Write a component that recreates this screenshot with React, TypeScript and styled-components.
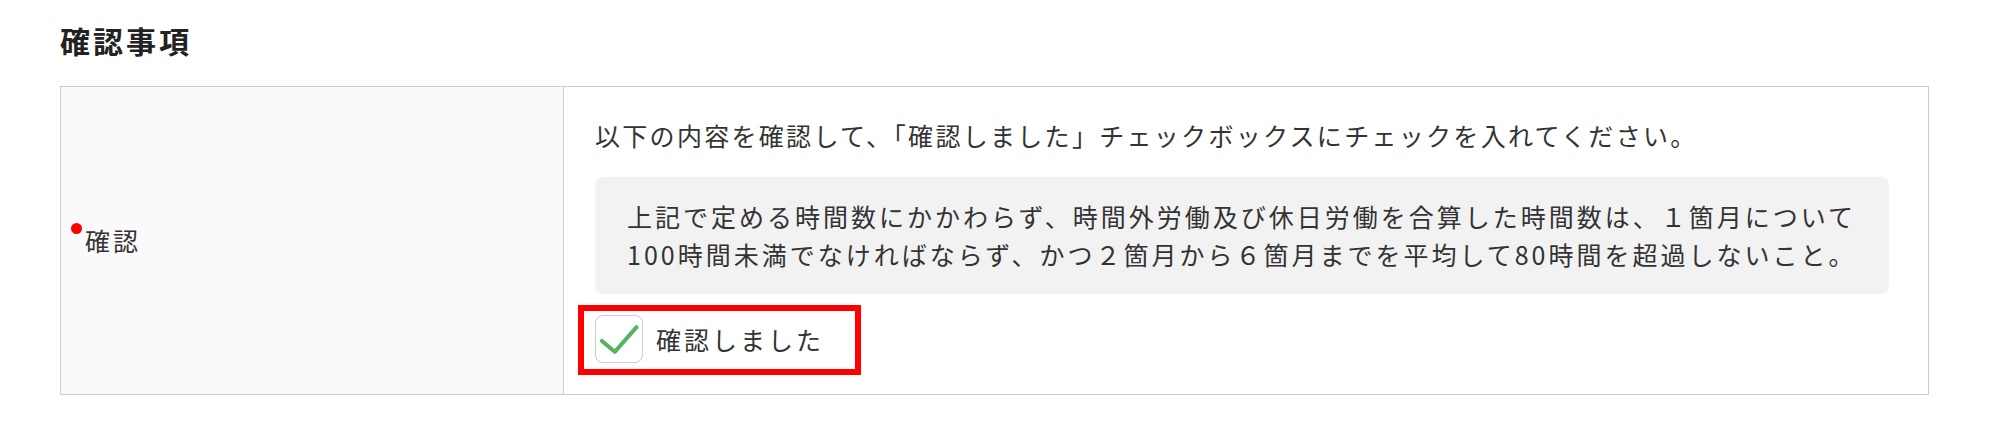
import React from "react";
import styled, { createGlobalStyle } from "styled-components";

const GlobalStyle = createGlobalStyle`
  html, body {
    margin: 0;
    padding: 0;
    background: #ffffff;
  }
  body {
    font-family: "Noto Sans CJK JP", "Noto Sans", sans-serif;
    color: #333333;
  }
`;

const Page = styled.div`
  width: 1869px;
  padding: 18px 0 0 60px;
`;

const Title = styled.h2`
  margin: 0 0 24px;
  font-size: 30px;
  line-height: 44px;
  font-weight: 700;
  letter-spacing: 3px;
  color: #222222;
`;

const Table = styled.div`
  display: grid;
  grid-template-columns: 502px 1fr;
  border: 1px solid #cccccc;
`;

const HeadCell = styled.div`
  display: flex;
  align-items: center;
  padding-left: 10px;
  background: #fafafa;
`;

const RequiredLabel = styled.div`
  display: flex;
  align-items: flex-start;
  font-size: 25px;
  line-height: 37px;
  letter-spacing: 3px;
`;

const Dot = styled.span`
  flex: none;
  width: 11px;
  height: 11px;
  margin: 1px 3px 0 0;
  border-radius: 50%;
  background: #ff0000;
`;

const BodyCell = styled.div`
  border-left: 1px solid #cccccc;
  padding: 30px 39px 31px 31px;
  font-size: 25px;
  letter-spacing: 3px;
  background: #ffffff;
`;

const Intro = styled.p`
  margin: 0;
  line-height: 37px;
  letter-spacing: 2.3px;
  white-space: nowrap;
`;

const NoteBox = styled.div`
  margin-top: 23px;
  padding: 21px 32px;
  border-radius: 8px;
  background: #f2f2f2;
  line-height: 37.5px;
  white-space: nowrap;
`;

const CheckRow = styled.label`
  position: relative;
  display: flex;
  align-items: center;
  width: fit-content;
  margin-top: 21px;
  line-height: 37px;
`;

const CheckBox = styled.span`
  flex: none;
  display: flex;
  align-items: center;
  justify-content: center;
  box-sizing: border-box;
  width: 48px;
  height: 48px;
  border: 1.5px solid #cccccc;
  border-radius: 8px;
  background: #ffffff;
`;

const CheckText = styled.span`
  margin-left: 13px;
`;

const Highlight = styled.span`
  position: absolute;
  top: -10px;
  left: -17px;
  width: 283px;
  height: 70px;
  box-sizing: border-box;
  border: 6px solid #ff0000;
  pointer-events: none;
`;

export default function App() {
  return (
    <>
      <GlobalStyle />
      <Page>
        <Title>確認事項</Title>
        <Table>
          <HeadCell>
            <RequiredLabel>
              <Dot />
              確認
            </RequiredLabel>
          </HeadCell>
          <BodyCell>
            <Intro>
              以下の内容を確認して、「確認しました」チェックボックスにチェックを入れてください。
            </Intro>
            <NoteBox>
              上記で定める時間数にかかわらず、時間外労働及び休日労働を合算した時間数は、１箇月について
              <br />
              100時間未満でなければならず、かつ２箇月から６箇月までを平均して80時間を超過しないこと。
            </NoteBox>
            <CheckRow>
              <CheckBox>
                <svg width="48" height="48" viewBox="0 0 48 48" style={{ marginLeft: "-1.5px", marginTop: "-1.5px" }}>
                  <polyline
                    points="7,27 20,38 42,13"
                    fill="none"
                    stroke="#54b35c"
                    strokeWidth="4"
                    strokeLinecap="round"
                    strokeLinejoin="round"
                  />
                </svg>
              </CheckBox>
              <CheckText>確認しました</CheckText>
              <Highlight />
            </CheckRow>
          </BodyCell>
        </Table>
      </Page>
    </>
  );
}
